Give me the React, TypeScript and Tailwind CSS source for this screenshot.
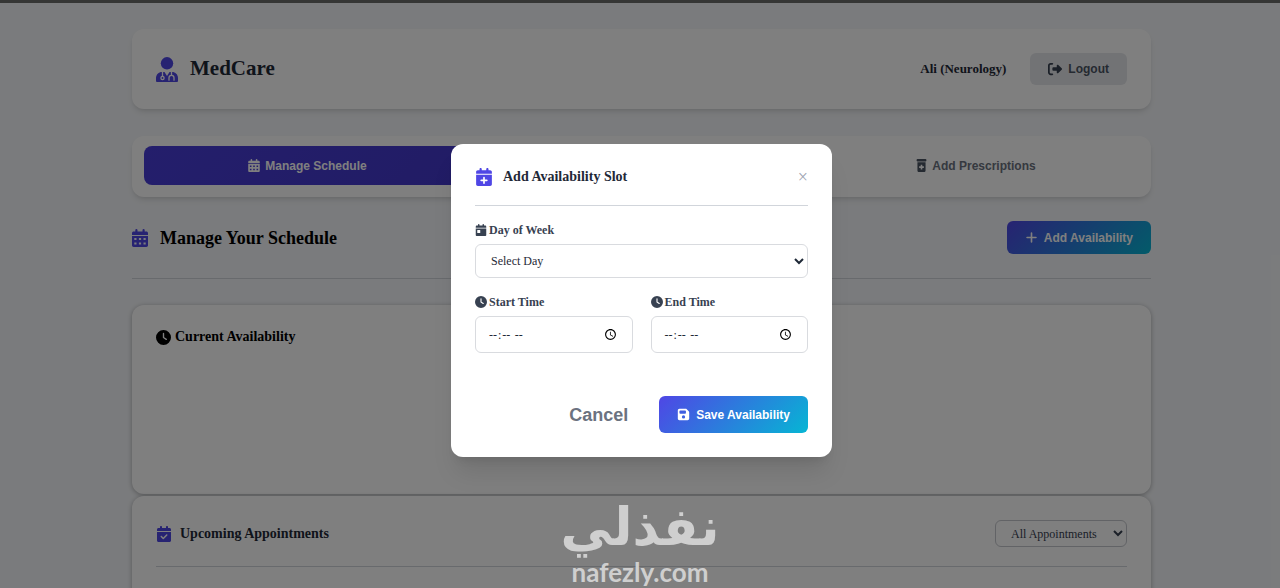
import type { ReactNode } from 'react';
import {
  FaCalendarCheck,
  FaCalendarDay,
  FaCalendarPlus,
  FaClock,
  FaFloppyDisk,
  FaPlus,
  FaPrescriptionBottleMedical,
  FaRightFromBracket,
} from 'react-icons/fa6';

interface IconProps {
  className?: string;
}

function DoctorIcon({ className }: IconProps) {
  return (
    <svg viewBox="0 0 22 25" className={className} aria-hidden="true">
      <circle cx="11" cy="6.3" r="6.2" fill="currentColor" />
      <path d="M6 15h10c3.4 0 6 2.600 6 6v2.700c0 .8-.5 1.300-1.300 1.300H1.300C.5 25 0 24.500 0 23.700V21c0-3.400 2.600-6 6-6z" fill="currentColor" />
      <g fill="none" stroke="white" strokeWidth="1.300">
        <path d="M6.500 15v4.500M15.500 15v3" />
        <circle cx="6.500" cy="21" r="1.600" />
        <path d="M13 23.200v-2.400a2.500 2.500 0 0 1 5 0v2.400" strokeLinecap="round" />
      </g>
      <path d="M8.500 15h5L11 19z" fill="white" />
    </svg>
  );
}

function CalendarIcon({ className }: IconProps) {
  return (
    <svg viewBox="0 0 16 18" className={className} fill="currentColor" aria-hidden="true">
      <path
        fillRule="evenodd"
        d="M3.300 1.200a1.100 1.100 0 0 1 2.200 0V2.500h5V1.200a1.100 1.100 0 0 1 2.200 0V2.500h1.600c1 0 1.700.7 1.700 1.700V6H0V4.200c0-1 .7-1.700 1.700-1.700h1.600zM0 7h16v9.300c0 1-.7 1.700-1.700 1.700H1.700C.7 18 0 17.300 0 16.300zM2.300 9v2h2.200V9zM6.900 9v2h2.200V9zM11.500 9v2h2.200V9zM2.300 13.500v2h2.200v-2zM6.900 13.500v2h2.200v-2zM11.500 13.500v2h2.200v-2z"
      />
    </svg>
  );
}

function Header() {
  return (
    <header className="flex h-20 items-center justify-between rounded-xl bg-white px-6 shadow-md">
      <div className="flex items-center gap-3 text-[21px] font-bold text-[#1f2937]">
        <DoctorIcon className="h-[25px] w-[22px] text-[#4f46e5]" />
        <h1>MedCare</h1>
      </div>
      <div className="flex items-center gap-6">
        <span className="text-[13px] font-bold text-[#1f2937]">Ali (Neurology)</span>
        <button className="flex h-8 items-center gap-1.5 rounded-md bg-[#e5e7eb] px-[18px] font-[Liberation_Sans,sans-serif] text-xs font-bold text-[#4b5563]">
          <FaRightFromBracket className="size-3.5 text-[#374151]" />
          Logout
        </button>
      </div>
    </header>
  );
}

function Tabs() {
  return (
    <nav className="mt-[27px] grid grid-cols-3 gap-[7px] rounded-xl bg-white px-3 pt-2.5 pb-3 font-[Liberation_Sans,sans-serif] text-xs font-bold shadow-md">
      <button className="flex h-[39px] items-center justify-center gap-[5px] rounded-lg bg-linear-[135deg,#483dd8,#4338ca] text-white">
        <CalendarIcon className="h-[13px] w-3" />
        Manage Schedule
      </button>
      <button className="col-start-3 flex h-[39px] items-center justify-center gap-1 rounded-lg text-[#6b7280]">
        <FaPrescriptionBottleMedical className="size-[13px] text-[#4b5563]" />
        Add Prescriptions
      </button>
    </nav>
  );
}

function TimeField({ id, label }: { id: string; label: string }) {
  return (
    <div className="min-w-0">
      <FieldLabel htmlFor={id}>
        <FaClock className="size-3" />
        {label}
      </FieldLabel>
      <input
        id={id}
        type="time"
        className="mt-1.5 block h-[37px] w-full rounded-md border border-[#d9dbdf] px-3 text-xs text-[#1f2937]"
      />
    </div>
  );
}

function FieldLabel({ htmlFor, children }: { htmlFor: string; children: ReactNode }) {
  return (
    <label htmlFor={htmlFor} className="flex items-center gap-0.5 text-xs leading-4 font-bold text-[#374151]">
      {children}
    </label>
  );
}

function AvailabilityDialog() {
  return (
    <div
      role="dialog"
      aria-labelledby="slot-title"
      className="w-[381px] rounded-xl bg-white px-6 pt-[17px] pb-6 shadow-xl"
    >
      <div className="flex h-[45px] items-start justify-between border-b border-[#d1d5db]">
        <div className="flex h-8 items-center gap-2.5">
          <FaCalendarPlus className="size-[18px] text-[#4f46e5]" />
          <h2 id="slot-title" className="text-sm font-bold text-[#1f2937]">
            Add Availability Slot
          </h2>
        </div>
        <button aria-label="Close" className="flex h-8 items-center text-lg text-[#9ca3af]">
          ×
        </button>
      </div>

      <form className="pt-4">
        <FieldLabel htmlFor="day">
          <FaCalendarDay className="size-3" />
          Day of Week
        </FieldLabel>
        <select
          id="day"
          className="mt-1.5 h-[34px] w-full rounded-md border border-[#d9dbdf] bg-white px-[11px] text-xs text-[#1f2937]"
        >
          <option>Select Day</option>
        </select>

        <div className="mt-4 grid grid-cols-2 gap-[18px]">
          <TimeField id="start" label="Start Time" />
          <TimeField id="end" label="End Time" />
        </div>

        <div className="mt-[43px] flex items-center justify-end gap-[31px] font-[Liberation_Sans,sans-serif] font-bold">
          <button type="button" className="text-lg text-[#6b7280]">
            Cancel
          </button>
          <button
            type="button"
            className="flex h-[37px] items-center gap-1.5 rounded-md bg-linear-[135deg,#4f46e5,#06b6d4] px-[18px] text-xs text-white"
          >
            <FaFloppyDisk className="size-[13px]" />
            Save Availability
          </button>
        </div>
      </form>
    </div>
  );
}

function Watermark() {
  return (
    <div className="pointer-events-none absolute inset-x-0 bottom-0 flex flex-col items-center text-[#cfcfcf]">
      <span lang="ar" dir="rtl" className="h-[51px] font-[DejaVu_Sans,sans-serif] text-[52px] leading-[44px] font-bold">
        نفذلي
      </span>
      <span className="font-[Lato,sans-serif] text-[26px] leading-8 font-bold">nafezly.com</span>
    </div>
  );
}

export default function App() {
  return (
    <div className="relative h-screen overflow-hidden bg-[#f5f7fa] font-[Liberation_Serif,serif]">
      <main className="border-t-[3px] border-[#6a6c6a] pt-[26px] pl-[3px]">
        <div className="mx-auto max-w-[1019px]">
          <Header />
          <Tabs />

          <div className="mt-6 flex items-center justify-between border-b border-[#d1d5db] pb-6">
            <h2 className="flex items-center gap-3 text-lg leading-8 font-bold text-black">
              <CalendarIcon className="h-[18px] w-4 text-[#4f46e5]" />
              Manage Your Schedule
            </h2>
            <button className="flex h-[33px] items-center gap-1.5 rounded-md bg-linear-[135deg,#4f46e5,#06b6d4] px-[18px] font-[Liberation_Sans,sans-serif] text-xs font-bold text-white">
              <FaPlus className="size-[13px]" />
              Add Availability
            </button>
          </div>

          <section className="mt-[26px] h-[189px] rounded-xl bg-white px-6 pt-5 shadow-[0_1px_5px_rgba(0,0,0,0.3)]">
            <h3 className="flex items-center gap-1 text-sm leading-6 font-bold text-black">
              <FaClock className="size-[15px]" />
              Current Availability
            </h3>
          </section>

          <section className="mt-0.5 h-[189px] rounded-xl bg-white px-6 pt-6 shadow-[0_1px_5px_rgba(0,0,0,0.3)]">
            <div className="flex items-start justify-between border-b border-[#d1d5db] pb-[18px]">
              <h3 className="flex items-center gap-2 text-sm leading-7 font-bold text-[#1f2937]">
                <FaCalendarCheck className="size-4 text-[#4f46e5]" />
                Upcoming Appointments
              </h3>
              <select
                aria-label="Filter appointments"
                className="h-[27px] w-[132px] rounded-md border border-[#c4c7cc] bg-white pl-[11px] text-xs text-[#374151]"
              >
                <option>All Appointments</option>
              </select>
            </div>
          </section>
        </div>
      </main>

      <div className="absolute inset-0 flex items-start justify-center bg-black/50 pt-36 pl-[3px]">
        <AvailabilityDialog />
      </div>
      <Watermark />
    </div>
  );
}
